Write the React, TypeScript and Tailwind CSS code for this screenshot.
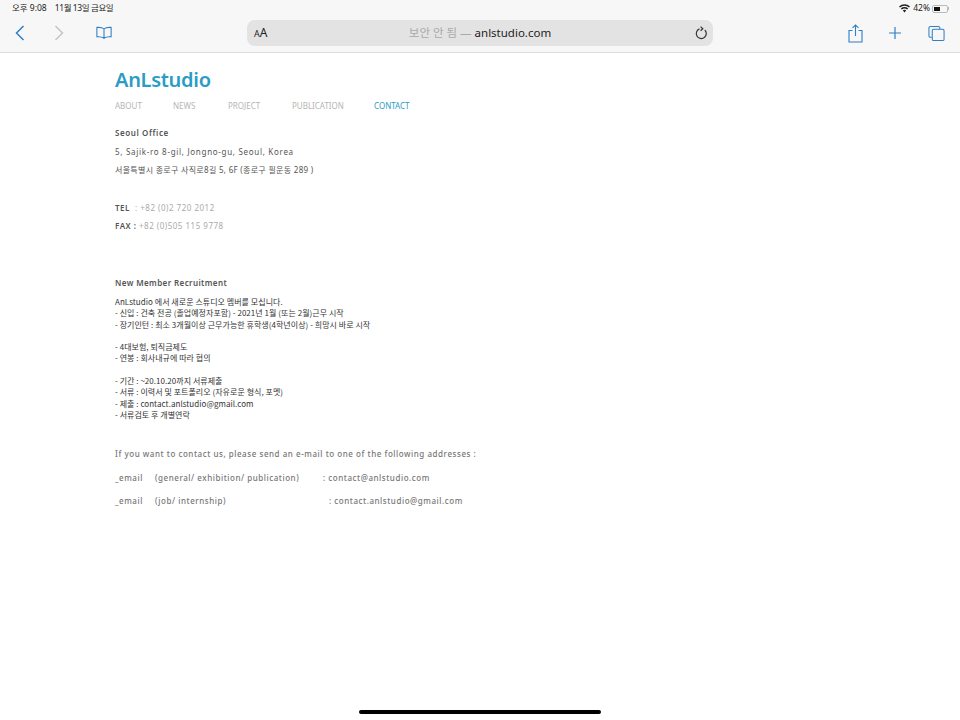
const korean = '"Noto Sans CJK KR", sans-serif';

function Line({ children }: { children?: React.ReactNode }) {
  return <div className="h-[11.3px] leading-[11.3px] whitespace-pre">{children}</div>;
}

function StatusBar() {
  return (
    <div className="flex h-[17px] items-center justify-between pl-[12px] pr-[11px] text-[8.5px] text-[#222]">
      <div className="flex gap-[8px]">
        <span>오후 9:08</span>
        <span className="tracking-[-0.4px]">11월 13일 금요일</span>
      </div>
      <div className="flex items-center">
        <svg width="11" height="9" viewBox="0 0 22 18" fill="#222">
          <path d="M11 17 7.600 13.200a5 5 0 0 1 6.800 0Z" />
          <path d="M5.800 11.200 3.600 8.800a11 11 0 0 1 14.800 0l-2.200 2.400a8 8 0 0 0-10.400 0Z" />
          <path d="M2 7 0 4.800a16 16 0 0 1 22 0L20 7A13 13 0 0 0 2 7Z" />
        </svg>
        <span className="ml-[3px]">42%</span>
        <div className="ml-[2px] flex items-center">
          <div className="h-[8px] w-[16px] rounded-[2px] border border-[#bbb] p-[1px]">
            <div className="h-full w-[6px] bg-[#111]" />
          </div>
          <div className="h-[3px] w-[1px] bg-[#bbb]" />
        </div>
      </div>
    </div>
  );
}

function Toolbar() {
  return (
    <div className="flex h-[35px] items-start pt-[3px]">
      <div className="flex h-[26px] w-[247px] items-center">
        <svg className="ml-[15px]" width="10" height="16" viewBox="0 0 10 16" fill="none" stroke="#2f7fc4" strokeWidth="1.5">
          <path d="M8.500 1 1.500 8l7 7" />
        </svg>
        <svg className="ml-[29px]" width="10" height="16" viewBox="0 0 10 16" fill="none" stroke="#c4c4c4" strokeWidth="1.5">
          <path d="M1.500 1l7 7-7 7" />
        </svg>
        <svg className="ml-[32px]" width="16" height="14" viewBox="0 0 18 15" fill="none" stroke="#2f7fc4" strokeWidth="1.200">
          <path d="M9 3C7.500 1.400 4.500 1 1 1.200v10.600c3.500-.2 6.500.2 8 1.700 1.500-1.500 4.500-1.900 8-1.700V1.200C13.500 1 10.500 1.400 9 3Zm0 0v10.500" />
        </svg>
      </div>
      <div className="relative flex h-[26px] w-[466px] items-center justify-center rounded-[8px] bg-[#e3e3e3] text-[11.5px]">
        <span className="absolute left-[7px] text-[#222]">
          <span className="text-[9px]">A</span>
          <span className="text-[12px]">A</span>
        </span>
        <span className="text-[#aaa]">보안 안 됨 —&nbsp;</span>
        <span className="text-[#222]">anlstudio.com</span>
        <svg className="absolute right-[5px]" width="13" height="14" viewBox="0 0 13 14" fill="none" stroke="#333" strokeWidth="1.200">
          <path d="M4.500 2.900A5 5 0 1 0 9.800 4M5.600 0.600 7.800 2.700 5.600 4.800" />
        </svg>
      </div>
      <div className="flex h-[26px] items-center">
        <svg className="ml-[135px]" width="15" height="19" viewBox="0 0 15 19" fill="none" stroke="#2f7fc4" strokeWidth="1.100">
          <path d="M4.500 6.500H1v11.500h13V6.500h-3.500M7.500 12V1M4.500 3.800 7.500 1l3 2.800" />
        </svg>
        <svg className="ml-[25px]" width="14" height="14" viewBox="0 0 14 14" fill="none" stroke="#2f7fc4" strokeWidth="1.200">
          <path d="M7 1v12M1 7h12" />
        </svg>
        <svg className="ml-[26px]" width="17" height="17" viewBox="0 0 18 17" fill="none" stroke="#2f7fc4" strokeWidth="1.100">
          <path d="M4 12.500H2.500A1.500 1.500 0 0 1 1 11V2.500A1.500 1.500 0 0 1 2.500 1H11a1.500 1.500 0 0 1 1.500 1.500V4" />
          <rect x="4.500" y="4" width="12.500" height="12" rx="1.500" />
        </svg>
      </div>
    </div>
  );
}

export default function App() {
  return (
    <div className="relative h-[720px] w-[960px] overflow-hidden bg-white font-['Noto_Sans','Noto_Sans_CJK_KR',sans-serif]">
      <div className="h-[53px] border-b border-[#dcdcdc] bg-[#f7f7f7]">
        <StatusBar />
        <Toolbar />
      </div>

      <main className="pl-[115px]">
        <div className="mt-[14px] h-[26px] text-[20px] font-semibold leading-[26px] tracking-[-0.3px] text-[#2b9cc4]">AnLstudio</div>

        <nav className="mt-[7px] flex h-[12px] items-center text-[8px] text-[#b5b5b5]">
          <span className="w-[58px]">ABOUT</span>
          <span className="w-[55px]">NEWS</span>
          <span className="w-[64px]">PROJECT</span>
          <span className="w-[82px]">PUBLICATION</span>
          <span className="text-[#2b9cc4]">CONTACT</span>
        </nav>

        <div className="mt-[15px] text-[8px] text-[#555]">
          <div className="h-[12px] font-semibold leading-[12px] tracking-[0.6px]">Seoul Office</div>
          <div className="mt-[7px] h-[12px] leading-[12px] tracking-[0.7px]">5, Sajik-ro 8-gil, Jongno-gu, Seoul, Korea</div>
          <div className="mt-[6px] h-[12px] leading-[12px] tracking-[0.3px]">서울특별시 종로구 사직로8길 5, 6F (종로구 필운동 289 )</div>
          <div className="mt-[26px] h-[12px] leading-[12px] tracking-[0.5px] text-[#aaa]">
            <span className="font-semibold text-[#555]">TEL</span>
            <span>&nbsp; : +82 (0)2 720 2012</span>
          </div>
          <div className="mt-[6px] h-[12px] leading-[12px] tracking-[0.5px] text-[#aaa]">
            <span className="font-semibold text-[#555]">FAX :</span>
            <span> +82 (0)505 115 9778</span>
          </div>
          <div className="mt-[45px] h-[12px] font-semibold leading-[12px] tracking-[0.4px]">New Member Recruitment</div>
        </div>

        <div className="mt-[7px] text-[8px] tracking-[0.04px] text-[#333]" style={{ fontFamily: korean }}>
          <Line>AnLstudio 에서 새로운 스튜디오 멤버를 모십니다.</Line>
          <Line>- 신입 : 건축 전공 (졸업예정자포함) - 2021년 1월 (또는 2월)근무 시작</Line>
          <Line>- 장기인턴 : 최소 3개월이상 근무가능한 휴학생(4학년이상) - 희망시 바로 시작</Line>
          <Line> </Line>
          <Line>- 4대보험, 퇴직금제도</Line>
          <Line>- 연봉 : 회사내규에 따라 협의</Line>
          <Line> </Line>
          <Line>- 기간 : ~20.10.20까지 서류제출</Line>
          <Line>- 서류 : 이력서 및 포트폴리오 (자유로운 형식, 포멧)</Line>
          <Line>- 제출 : contact.anlstudio@gmail.com</Line>
          <Line>- 서류검토 후 개별연락</Line>
        </div>

        <div className="mt-[28px] text-[8px] font-medium tracking-[0.55px] text-[#777]">
          <div className="h-[12px] leading-[12px]">If you want to contact us, please send an e-mail to one of the following addresses :</div>
          <div className="mt-[12px] flex h-[12px] leading-[12px]">
            <span className="w-[40px]">_email</span>
            <span className="w-[168px]">(general/ exhibition/ publication)</span>
            <span>: contact@anlstudio.com</span>
          </div>
          <div className="mt-[11px] flex h-[12px] leading-[12px]">
            <span className="w-[40px]">_email</span>
            <span className="w-[174px]">(job/ internship)</span>
            <span>: contact.anlstudio@gmail.com</span>
          </div>
        </div>
      </main>

      {/* home indicator */}
      <div className="absolute left-[359px] top-[710px] h-[4px] w-[242px] rounded-full bg-black" />
    </div>
  );
}
